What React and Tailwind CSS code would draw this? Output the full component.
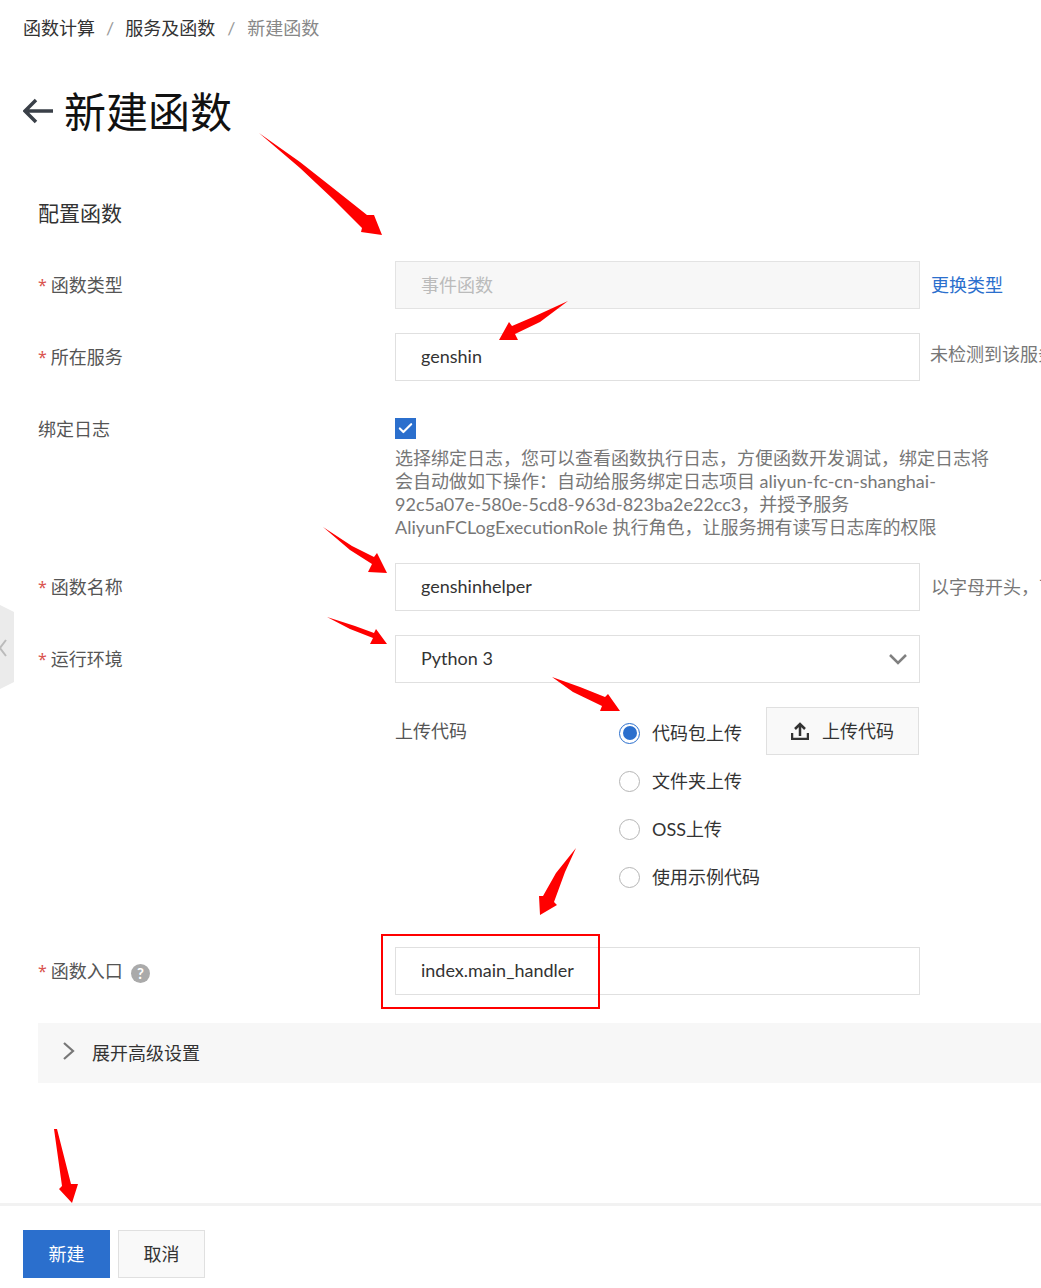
import React from 'react'
import { Check } from 'lucide-react'

const Required = () => <span className="font-['Noto_Sans'] text-[#d9534f] text-[16px] mr-[4px]">*</span>

const Row = ({ label, required, children }) => (
  <div className="flex mb-6">
    <div className="w-[357px] h-12 flex items-center text-[18px] text-[#555] shrink-0">
      {required && <Required />}
      {label}
    </div>
    {children}
  </div>
)

const TextInput = ({ value }) => (
  <input
    readOnly
    value={value}
    className="w-[525px] h-12 shrink-0 border border-[#e0e0e0] bg-white pl-[25px] pb-[2px] text-[18px] text-[#333] outline-none"
  />
)

const Radio = ({ label, checked }) => (
  <div className="flex items-center h-12 text-[18px] text-[#333]">
    {checked ? (
      <span className="w-[21px] h-[21px] rounded-full border border-[#2b6fcd] flex items-center justify-center mr-3">
        <span className="w-[14px] h-[14px] rounded-full bg-[#2b6fcd]"></span>
      </span>
    ) : (
      <span className="w-[21px] h-[21px] rounded-full border border-[#b5b5b5] mr-3"></span>
    )}
    {label}
  </div>
)

const helpLines = [
  '选择绑定日志，您可以查看函数执行日志，方便函数开发调试，绑定日志将',
  '会自动做如下操作：自动给服务绑定日志项目 aliyun-fc-cn-shanghai-',
  '92c5a07e-580e-5cd8-963d-823ba2e22cc3，并授予服务',
  'AliyunFCLogExecutionRole 执行角色，让服务拥有读写日志库的权限',
]

// red annotation arrows drawn on top of the screenshot
const arrows = [
  '259,133 300,162 333,188 367,215 374,215 382,235 361,232 362,228 333,199 300,168',
  '568,301 533,317 512,326 509,322 499,340 518,340 515,334 540,322',
  '323,527 352,546 374,557 377,553 387,573 368,572 372,564 350,550',
  '327,617 355,626 374,633 376,629 387,644 370,644 373,638 350,629',
  '552,677 580,687 605,697 608,694 620,711 600,711 602,706 573,692',
  '576,848 565,872 554,902 557,905 540,915 539,896 543,896 556,873',
  '54,1129 57,1129 71,1184 78,1184 72,1203 59,1189 62,1186',
]

export default function App() {
  return (
    <div className="relative w-full h-[1288px] overflow-hidden bg-white font-['Lato','Noto_Sans_CJK_SC',sans-serif]">
      {/* breadcrumb */}
      <div className="flex pl-[23px] pt-4 text-[18px] leading-6 text-[#333] whitespace-nowrap">
        <span>函数计算</span>
        <span className="mx-[11px] text-[#999]">/</span>
        <span>服务及函数</span>
        <span className="mx-3 text-[#999]">/</span>
        <span className="text-[#888]">新建函数</span>
      </div>

      {/* title */}
      <div className="flex items-center h-[60px] mt-[42px] pl-[23px]">
        <svg width="30" height="26" viewBox="0 0 30 26" fill="none" stroke="#3a4048" strokeWidth="3.5" className="mr-[11px] -mt-[2px]">
          <path d="M30 13H2M13 2L2 13l11 11" />
        </svg>
        <h1 className="text-[42px] leading-[60px] text-[#111]">新建函数</h1>
      </div>

      <div className="pl-[38px]">
        <h2 className="mt-[57px] mb-[34px] text-[21px] leading-7 text-[#333]">配置函数</h2>

        <div className="flex mb-6">
          <div className="w-[357px] h-12 flex items-center text-[18px] text-[#555] shrink-0">
            <Required />
            函数类型
          </div>
          <div className="w-[525px] h-12 shrink-0 border border-[#e3e3e3] bg-[#f7f7f7] pl-[25px] flex items-center text-[18px] text-[#bbb]">
            事件函数
          </div>
          <a className="ml-[11px] self-center text-[18px] text-[#2b6fcd] whitespace-nowrap">更换类型</a>
        </div>

        <Row label="所在服务" required>
          <TextInput value="genshin" />
          <span className="ml-[10px] mt-[9px] text-[18px] leading-6 text-[#777] whitespace-nowrap">未检测到该服务绑定日志</span>
        </Row>

        <div className="flex mb-6">
          <div className="w-[357px] pt-3 text-[18px] leading-6 text-[#555] shrink-0">绑定日志</div>
          <div className="pt-[13px] text-[18px] leading-[23px] text-[#777] whitespace-nowrap">
            <span className="flex items-center justify-center w-[21px] h-[21px] mb-2 bg-[#2b6fcd]">
              <Check size={17} color="#fff" strokeWidth={3} />
            </span>
            {helpLines.map((line) => (
              <div key={line}>{line}</div>
            ))}
          </div>
        </div>

        <Row label="函数名称" required>
          <TextInput value="genshinhelper" />
          <span className="ml-[11px] self-center text-[18px] text-[#777] whitespace-nowrap">以字母开头，可包含字母、数字</span>
        </Row>

        <Row label="运行环境" required>
          <div className="w-[525px] h-12 shrink-0 border border-[#e0e0e0] pl-[25px] pr-[12px] pb-[2px] flex items-center justify-between text-[18px] text-[#333]">
            Python 3
            <svg width="18" height="11" viewBox="0 0 18 11" fill="none" stroke="#808080" strokeWidth="2.5" className="mt-[2px]">
              <path d="M1 1l8 8 8-8" />
            </svg>
          </div>
        </Row>

        <div className="flex h-[216px] mb-6">
          <div className="w-[357px] shrink-0"></div>
          <div className="w-[224px] pt-3 text-[18px] leading-6 text-[#555]">上传代码</div>
          <div className="w-[147px] pt-[2px]">
            <Radio label="代码包上传" checked />
            <Radio label="文件夹上传" />
            <Radio label="OSS上传" />
            <Radio label="使用示例代码" />
          </div>
          <button className="w-[153px] h-12 flex items-center justify-center border border-[#e0e0e0] bg-[#f9f9f9] text-[18px] text-[#333]">
            <svg width="18" height="18" viewBox="0 0 18 18" fill="none" stroke="#333" strokeWidth="2.5" className="mr-[13px]">
              <path d="M9 14V2M4 7l5-5 5 5M1 11v6h16v-6" />
            </svg>
            上传代码
          </button>
        </div>

        <div className="flex mb-7">
          <div className="w-[357px] h-12 flex items-center text-[18px] text-[#555] shrink-0">
            <Required />
            函数入口
            <span className="ml-[8px] mt-[4px] w-[19px] h-[19px] rounded-full bg-[#aaa] text-white text-[15px] font-bold flex items-center justify-center">?</span>
          </div>
          <TextInput value="index.main_handler" />
        </div>

        <div className="flex items-center h-[60px] bg-[#f7f7f7] pl-[25px] text-[18px] text-[#333]">
          <svg width="12" height="18" viewBox="0 0 12 18" fill="none" stroke="#777" strokeWidth="2.2" className="mr-[17px] -mt-1">
            <path d="M1 1l9 8-9 8" />
          </svg>
          展开高级设置
        </div>
      </div>

      {/* footer */}
      <div className="mt-[120px] border-t-[3px] border-[#f2f2f2] pt-[24px] pl-[23px] flex gap-2">
        <button className="w-[87px] h-12 bg-[#2b6fcd] text-white text-[18px]">新建</button>
        <button className="w-[87px] h-12 border border-[#e0e0e0] bg-[#f9f9f9] text-[#333] text-[18px]">取消</button>
      </div>

      {/* collapsed side tab */}
      <svg className="absolute left-0 top-[605px]" width="14" height="84" viewBox="0 0 14 84">
        <path d="M0 0L14 7V77L0 84Z" fill="#ebebeb" />
        <path d="M6 35L0 43L6 51" fill="none" stroke="#bbb" strokeWidth="2" />
      </svg>

      {/* annotations */}
      <div className="absolute left-[381px] top-[934px] w-[219px] h-[75px] border-2 border-[#f00]"></div>
      <svg className="absolute inset-0 pointer-events-none" width="1041" height="1288" viewBox="0 0 1041 1288">
        {arrows.map((points) => (
          <polygon key={points} points={points} fill="#f00" />
        ))}
      </svg>
    </div>
  )
}
